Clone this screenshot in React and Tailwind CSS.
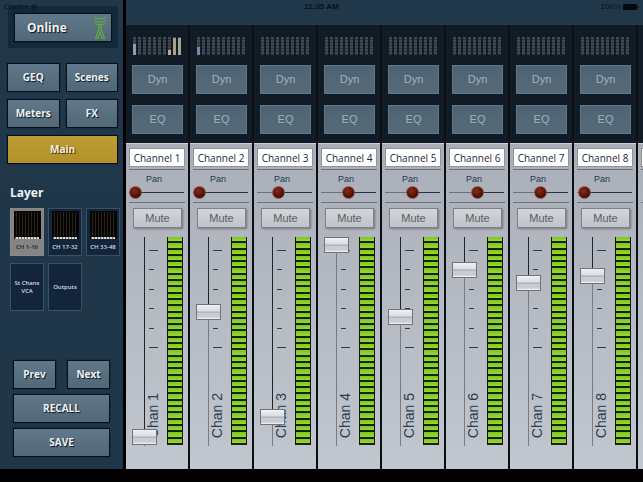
import React, { useState } from "react";

const channels = [
  { level: 1, pan: 0, eq: "first" },
  { level: 126, pan: 0, eq: "second" },
  { level: 21, pan: 15 },
  { level: 193, pan: 21 },
  { level: 121, pan: 21 },
  { level: 168, pan: 22 },
  { level: 155, pan: 21 },
  { level: 162, pan: 1 },
];

const litHeights = {
  first: { 0: ["h-[11px]", "bg-[#7f9fbc]"], 7: ["h-[5px]", "bg-[#b3aa98]"], 8: ["h-[17px]", "bg-[#a9a190]"], 9: ["h-[17px]", "bg-[#a9a190]"] },
  second: { 0: ["h-[8px]", "bg-[#6d8cb0]"] },
};

const range = (n) => Array.from({ length: n }, (_, i) => i);

function PanelButton({ className = "", children }) {
  return (
    <button
      type="button"
      className={`flex items-center justify-center border border-[#06101a] bg-linear-to-b from-[#62788a] to-[#506878] font-bold text-[#eef1f3] shadow-[0_0_1px_#06101a] [text-shadow:1px_1px_1px_#0a1520] ${className}`}
    >
      {children}
    </button>
  );
}

function Antenna() {
  return (
    <svg viewBox="0 0 14 24" className="h-6 w-3.5" fill="none" stroke="#5fae3c" strokeWidth="1.1" aria-hidden="true">
      <path d="M1 1.5 L4 3 L7 2.3 L10 3 L13 1.5 M1 4.5 L4.5 6.2 L7 5.5 L9.5 6.2 L13 4.5 M2 7.5 L5 9 L7 8.4 L9 9 L12 7.5" />
      <path d="M7 8.5 V11 M5.5 11 H8.5 V14 H5.5 Z M5.5 14 L2.5 22.5 H5 L7 16 L9 22.5 H11.5 L8.5 14" />
    </svg>
  );
}

function MiniMixer() {
  return (
    <svg viewBox="0 0 27 28" className="h-7 w-[27px]" aria-hidden="true">
      <rect width="27" height="28" fill="#050505" />
      {range(8).map((i) => (
        <g key={i}>
          <rect x={2 + i * 3} y="1" width="1" height="24" fill="#2b220f" />
          <rect x={1.5 + i * 3} y="26" width="2.5" height="2" fill="#d8d8d0" />
        </g>
      ))}
    </svg>
  );
}

function LayerButton({ active, strips, children }) {
  return (
    <button
      type="button"
      className={`flex h-12 w-full flex-col items-center border text-[6px] leading-[8px] font-semibold ${
        active ? "border-[#8b8b8b] bg-[#858484] text-[#222222]" : "border-[#3b5161] bg-[#12253a] text-[#d8dde2]"
      } ${strips ? "justify-start gap-1 pt-0.5" : "justify-center"}`}
    >
      {strips && <MiniMixer />}
      <span className={strips ? "whitespace-nowrap" : ""}>{children}</span>
    </button>
  );
}

function Sidebar() {
  return (
    <aside className="flex w-[126px] shrink-0 flex-col border-r-[3px] border-black bg-linear-to-b from-[#20384a] to-[#203649] pb-3 text-[10px]">
      <div className="mx-2 mt-1.5 mr-[5px] bg-[#142a3c] p-1.5 pt-[7px]">
        <PanelButton className="h-[29px] w-[98px] justify-between! pr-1 pl-3 text-[12px]">
          <span>Online</span>
          <Antenna />
        </PanelButton>
      </div>
      <div className="mr-[5px] ml-[7px] mt-[15px] grid grid-cols-2 gap-x-[6px] gap-y-[7px]">
        <PanelButton className="h-[29px]">GEQ</PanelButton>
        <PanelButton className="h-[29px]">Scenes</PanelButton>
        <PanelButton className="h-[29px]">Meters</PanelButton>
        <PanelButton className="h-[29px]">FX</PanelButton>
        <button
          type="button"
          className="col-span-2 h-[29px] border border-[#06101a] bg-linear-to-b from-[#bb9d36] to-[#b39128] font-bold text-[#f5f1e4] shadow-[0_0_1px_#06101a] [text-shadow:1px_1px_1px_#3a2c05]"
        >
          Main
        </button>
      </div>
      <h2 className="mt-[19px] ml-2.5 text-[12px] leading-5 font-bold text-[#f0f3f5]">Layer</h2>
      <div className="mt-[5px] ml-2.5 grid grid-cols-[repeat(3,34px)] gap-x-1 gap-y-[7px]">
        <LayerButton active strips>CH 1-16</LayerButton>
        <LayerButton strips>CH 17-32</LayerButton>
        <LayerButton strips>CH 33-48</LayerButton>
        <LayerButton>St Chans VCA</LayerButton>
        <LayerButton>Outputs</LayerButton>
      </div>
      <div className="mt-auto grid grid-cols-2 gap-x-[11px] gap-y-[5px] px-[13px]">
        <PanelButton className="h-[29px]">Prev</PanelButton>
        <PanelButton className="h-[29px]">Next</PanelButton>
        <PanelButton className="col-span-2 h-[29px]">RECALL</PanelButton>
        <PanelButton className="col-span-2 h-[29px]">SAVE</PanelButton>
      </div>
    </aside>
  );
}

function BandMeter({ kind }) {
  const lit = litHeights[kind] || {};
  return (
    <div className="flex h-[18px] gap-0.5">
      {range(10).map((i) => (
        <div
          key={i}
          className="flex w-[3px] flex-col justify-end bg-[repeating-linear-gradient(180deg,#414850_0px,#414850_2px,#2b343c_2px,#2b343c_3px)]"
        >
          {lit[i] && <div className={`${lit[i][0]} ${lit[i][1]}`} />}
        </div>
      ))}
    </div>
  );
}

function LevelMeter() {
  return (
    <div className="flex h-[208px] w-4 flex-col bg-[#0c1a04] px-px">
      {range(33).map((i) => (
        <div key={i} className="flex-1 border-b-2 border-[#132504] bg-linear-to-b from-[#7fc322] to-[#9ad834]" />
      ))}
    </div>
  );
}

function Strip({ number, channel }) {
  const [level, setLevel] = useState(channel.level);
  const [pan, setPan] = useState(channel.pan);
  const [name, setName] = useState(`Channel ${number}`);
  const faderSplit = 201 - level;
  const panSplit = pan + 6;
  return (
    <section className="flex w-16 shrink-0 flex-col border-r-2 border-[#0a0f16] font-['Liberation_Sans',Arial,sans-serif]">
      <div className="flex h-[118px] flex-col bg-[#101b26] pt-3 pl-[7px]">
        <BandMeter kind={channel.eq} />
        <div className="-ml-px mt-2.5 flex flex-col gap-[11px]">
          {["Dyn", "EQ"].map((label) => (
            <button
              key={label}
              type="button"
              className="h-[29px] w-[51px] border border-[#627685] bg-linear-to-b from-[#4d6373] to-[#566b7a] text-[11px] text-[#a5afb6]"
            >
              {label}
            </button>
          ))}
        </div>
      </div>
      <div className="flex grow flex-col border-t border-[#c9ced6] bg-linear-to-b from-[#a9aeb8] to-[#c2c6ce] px-[3px] pt-1">
        <input
          aria-label={`Name of channel ${number}`}
          value={name}
          onChange={(e) => setName(e.target.value)}
          className="h-[19px] w-14 border border-[#8f949c] bg-white text-center font-['Open_Sans',sans-serif] text-[10px] font-medium text-[#1c2a3a]"
        />
        <div className="mt-0.5 flex h-[34px] flex-col border-y border-[#6c727c]">
          <label htmlFor={`pan-${number}`} className="mt-0.5 pl-[17px] text-[9px] leading-[14px] text-[#24384a]">
            Pan
          </label>
          <input
            id={`pan-${number}`}
            type="range"
            min="0"
            max="42"
            value={pan}
            onChange={(e) => setPan(Number(e.target.value))}
            style={{ backgroundImage: `linear-gradient(90deg, #6c727c ${panSplit}px, #2a3039 ${panSplit}px)` }}
            className="h-[13px] w-[55px] appearance-none bg-[length:100%_1px] bg-center bg-no-repeat [&::-webkit-slider-thumb]:size-[13px] [&::-webkit-slider-thumb]:appearance-none [&::-webkit-slider-thumb]:rounded-full [&::-webkit-slider-thumb]:border [&::-webkit-slider-thumb]:border-[#8a5a52] [&::-webkit-slider-thumb]:bg-[radial-gradient(circle_at_40%_35%,#8a2a18,#4a0d06_70%)]"
          />
        </div>
        <button
          type="button"
          className="mt-[5px] ml-1 h-5 w-[49px] border border-[#7d828a] bg-linear-to-b from-[#d3d5d9] to-[#bfc2c8] text-[11px] leading-none text-[#5a5f66] shadow-[1px_1px_2px_#71757d]"
        >
          Mute
        </button>
        <div className="relative mt-[9px] flex">
          <input
            aria-label={`Chan ${number} fader`}
            type="range"
            min="0"
            max="193"
            value={level}
            onChange={(e) => setLevel(Number(e.target.value))}
            style={{ backgroundImage: `linear-gradient(#20242b ${faderSplit}px, #767b84 ${faderSplit}px)` }}
            className="relative z-10 ml-[3px] h-[209px] w-[25px] appearance-none bg-transparent bg-[length:1px_100%] bg-center bg-no-repeat [direction:rtl] [writing-mode:vertical-lr] [&::-webkit-slider-thumb]:h-4 [&::-webkit-slider-thumb]:w-[25px] [&::-webkit-slider-thumb]:appearance-none [&::-webkit-slider-thumb]:border [&::-webkit-slider-thumb]:border-[#70747c] [&::-webkit-slider-thumb]:bg-[linear-gradient(#f0f1f3,#d9dbdf_45%,#8e929a_50%,#c9ccd2_56%,#c9ccd2_85%,#f4f4f6)]"
          />
          <div className="absolute inset-y-0 left-[15px] flex w-[18px] flex-col items-center pt-[13px]">
            <div className="flex h-[98px] w-[9px] flex-col justify-between">
              <i className="h-px w-[9px] bg-[#333c48]" />
              <i className="h-px w-[5px] bg-[#333c48]" />
              <i className="h-px w-[5px] bg-[#333c48]" />
              <i className="h-px w-[5px] bg-[#333c48]" />
              <i className="h-px w-[5px] bg-[#333c48]" />
              <i className="h-px w-[9px] bg-[#333c48]" />
            </div>
            <span className="mt-auto mb-2 rotate-180 text-[14px] leading-[18px] whitespace-nowrap text-[#2a3d50] [writing-mode:vertical-rl]">
              Chan {number}
            </span>
          </div>
          <div className="ml-auto pr-0.5">
            <LevelMeter />
          </div>
        </div>
      </div>
    </section>
  );
}

function NextStripEdge() {
  return (
    <div className="flex min-w-0 grow flex-col">
      <div className="h-[118px] bg-[#101b26]" />
      <div className="grow border-t border-[#c9ced6] bg-linear-to-b from-[#a9aeb8] to-[#c2c6ce] pt-1 pl-[3px]">
        <div className="h-[19px] border border-r-0 border-[#8f949c] bg-white" />
        <div className="mt-0.5 h-[34px] border-y border-[#6c727c]" />
      </div>
    </div>
  );
}

function StatusBar() {
  return (
    <div className="absolute inset-x-0 top-0 grid h-3.5 grid-cols-3 items-center px-1 font-['Liberation_Sans',Arial,sans-serif] text-[8px] text-[#0a121a]">
      <div className="flex items-center gap-0.5">
        Carrier
        <svg viewBox="0 0 10 8" className="h-1.5 w-2" fill="none" stroke="#0a121a" strokeWidth="1.3" aria-hidden="true">
          <path d="M0.5 3 Q5 -1 9.5 3 M2.3 5 Q5 2.6 7.7 5" />
          <circle cx="5" cy="7" r="0.6" fill="#0a121a" />
        </svg>
      </div>
      <div className="text-center font-bold">11:35 AM</div>
      <div className="flex items-center justify-end gap-0.5">
        100%
        <svg viewBox="0 0 16 6" className="h-1.5 w-4" aria-hidden="true">
          <rect width="14" height="6" rx="1.2" fill="#05090d" />
          <rect x="14.5" y="2" width="1" height="2" fill="#05090d" />
        </svg>
      </div>
    </div>
  );
}

export default function App() {
  return (
    <div className="relative flex h-screen flex-col overflow-hidden bg-black pb-[13px] font-['Open_Sans',sans-serif]">
      <div className="flex min-h-0 grow">
        <Sidebar />
        <main className="flex min-w-0 grow overflow-hidden bg-[#20384a] pt-[25px]">
          {channels.map((channel, i) => (
            <Strip key={i} number={i + 1} channel={channel} />
          ))}
          <NextStripEdge />
        </main>
      </div>
      <StatusBar />
    </div>
  );
}
